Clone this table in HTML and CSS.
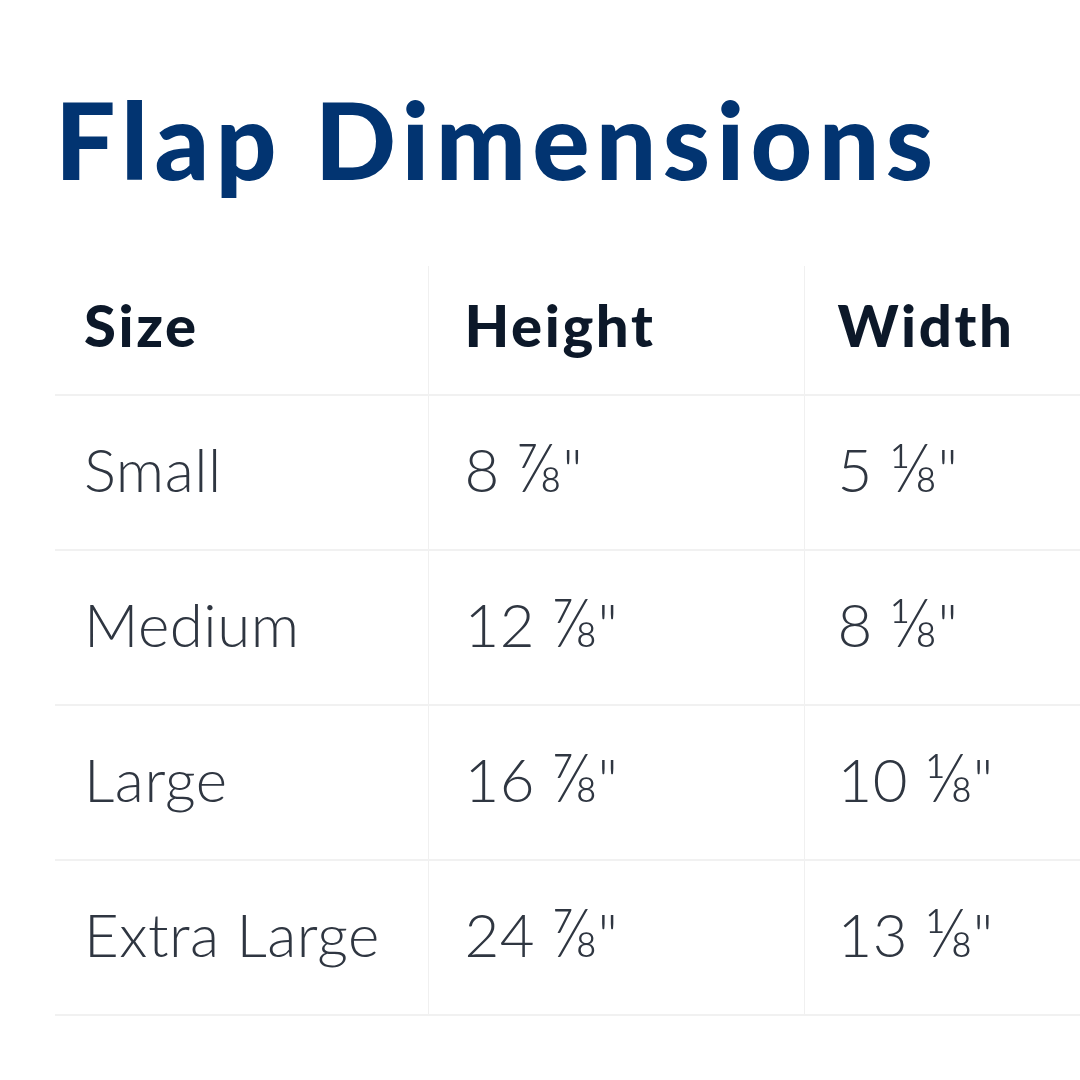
FILE: index.html
```html
<!DOCTYPE html>
<html>
<head>
<meta charset="utf-8">
<link rel="stylesheet" href="styles.css">
</head>
<body>
<main class="page">
  <h1 class="title">Flap Dimensions</h1>
  <table class="dims">
    <colgroup>
      <col class="col-size">
      <col class="col-height">
      <col class="col-width">
    </colgroup>
    <thead>
      <tr><th>Size</th><th>Height</th><th>Width</th></tr>
    </thead>
    <tbody>
      <tr><td>Small</td><td>8 <span class="frac">⅞</span>"</td><td>5 <span class="frac">⅛</span>"</td></tr>
      <tr><td>Medium</td><td>12 <span class="frac">⅞</span>"</td><td>8 <span class="frac">⅛</span>"</td></tr>
      <tr><td>Large</td><td>16 <span class="frac">⅞</span>"</td><td>10 <span class="frac">⅛</span>"</td></tr>
      <tr><td>Extra Large</td><td>24 <span class="frac">⅞</span>"</td><td>13 <span class="frac">⅛</span>"</td></tr>
    </tbody>
  </table>
</main>
</body>
</html>
```

FILE: styles.css
```css
html, body {
  margin: 0;
  padding: 0;
  background: #ffffff;
}
.page {
  width: 1080px;
  height: 1080px;
  overflow: hidden;
  padding: 79px 0 0 55px;
  box-sizing: border-box;
  font-family: Lato, "Open Sans", sans-serif;
}
.title {
  margin: 0 0 0 0;
  font-size: 107px;
  font-weight: 900;
  color: #023471;
  line-height: 120px;
  letter-spacing: 6.3px;
}
.dims {
  margin-top: 67px;
  border-collapse: collapse;
  width: 1025px;
  table-layout: fixed;
}
.col-size { width: 373px; }
.col-height { width: 376px; }
.col-width { width: 276px; }
.dims th, .dims td {
  text-align: left;
  padding: 0 0 0 36px;
  border-bottom: 2px solid #f1f1f1;
  white-space: nowrap;
}
.dims th + th, .dims td + td {
  border-left: 1px solid #f0f0f0;
}
.dims th:first-child, .dims td:first-child {
  padding-left: 29px;
}
.dims th:nth-child(3), .dims td:nth-child(3) {
  padding-left: 33px;
}
.dims th {
  height: 116px;
  padding-bottom: 12px;
  font-size: 58px;
  font-weight: 900;
  color: #0c1829;
  letter-spacing: 2.6px;
}
.dims td {
  height: 145px;
  padding-bottom: 8px;
  font-size: 60px;
  font-weight: 300;
  color: #2f3641;
  letter-spacing: 0.5px;
}
.frac {
  font-size: 1.12em;
  line-height: 1;
  letter-spacing: 0;
}
```
